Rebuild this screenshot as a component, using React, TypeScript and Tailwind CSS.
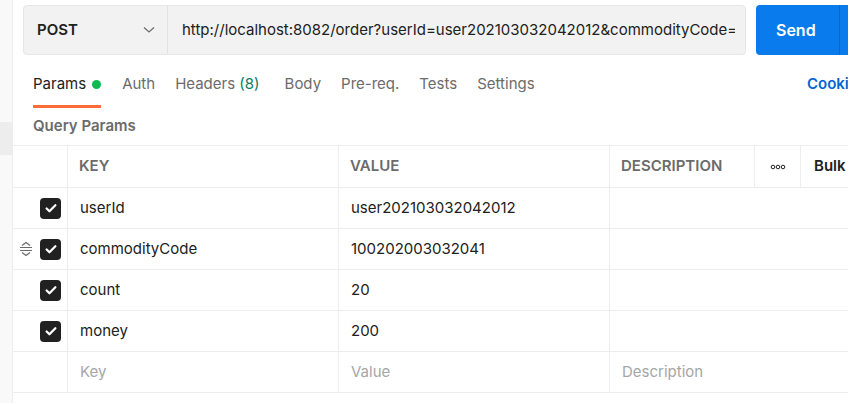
import React from "react";

const font = { fontFamily: "Inter, 'Noto Sans', sans-serif" };

function Check() {
  return (
    <div className="w-[21px] h-[21px] rounded-[4px] bg-[#212121] flex items-center justify-center">
      <svg width="14" height="14" viewBox="0 0 16 16" fill="none">
        <path d="M3 8.5l3.2 3.2L13 4.8" stroke="white" strokeWidth="2.6" strokeLinecap="round" strokeLinejoin="round" />
      </svg>
    </div>
  );
}

function Drag() {
  return (
    <svg width="14" height="16" viewBox="0 0 14 16" fill="none">
      <path d="M3 4.5L7 1.5l4 3" stroke="#6b6b6b" strokeWidth="1.2" />
      <path d="M1 6.5h12M1 9.5h12" stroke="#6b6b6b" strokeWidth="1.2" />
      <path d="M3 11.5L7 14.5l4-3" stroke="#6b6b6b" strokeWidth="1.2" />
    </svg>
  );
}

const rows = [
  { k: "userId", v: "user202103032042012", drag: false },
  { k: "commodityCode", v: "100202003032041", drag: true },
  { k: "count", v: "20", drag: false },
  { k: "money", v: "200", drag: false },
];

export default function App() {
  return (
    <div className="w-[848px] h-[403px] overflow-hidden bg-white flex" style={font}>
      <div className="w-[13px] shrink-0 bg-[#f9f9f9] border-r border-[#ededed] flex flex-col">
        <div className="h-[122px]" />
        <div className="h-[33px] bg-[#ededed]" />
      </div>
      <div className="flex-1 min-w-0 flex flex-col overflow-hidden">
        <div className="flex items-stretch pt-[5px] pl-[10px] h-[55px] gap-[10px]">
          <div className="w-[723px] shrink-0 flex bg-[#f2f2f2] border border-[#e6e6e6] rounded-[4px]">
            <div className="w-[144px] shrink-0 flex items-center justify-between pl-[13px] pr-[12px] border-r border-[#e3e3e3]">
              <span className="text-[15px] font-semibold text-[#212121]">POST</span>
              <svg width="12" height="8" viewBox="0 0 12 8" fill="none">
                <path d="M1 1.5l5 4.5 5-4.5" stroke="#6b6b6b" strokeWidth="1.2" />
              </svg>
            </div>
            <div className="flex-1 min-w-0 flex items-center pl-[14px] pr-[10px] overflow-hidden">
              <span className="text-[15px] text-[#212121] whitespace-nowrap overflow-hidden">
                http://localhost:8082/order?userId=user202103032042012&amp;commodityCode=100202003032041&amp;count=20&amp;money=200
              </span>
            </div>
          </div>
          <div className="flex-1 flex bg-[#097bed] rounded-l-[4px] overflow-hidden">
            <div className="w-[84px] shrink-0 flex items-center pl-[20px] border-r border-[#0a66c8]">
              <span className="text-[16px] font-semibold text-white">Send</span>
            </div>
          </div>
        </div>
        <div className="flex items-end h-[52px] pl-[20px] pr-0 relative">
          <div className="flex items-center text-[15px] text-[#6b6b6b] h-[46px] whitespace-nowrap">
            <div className="relative h-full flex items-center">
              <span className="text-[#212121]">Params</span>
              <span className="ml-[6px] w-[9px] h-[9px] rounded-full bg-[#0cbb52]" />
              <div className="absolute left-0 right-0 bottom-[-1px] h-[3px] bg-[#ff6c37]" />
            </div>
            <span className="ml-[21px]">Auth</span>
            <span className="ml-[20px]">
              Headers <span className="text-[#0f7b5f]">(8)</span>
            </span>
            <span className="ml-[25px]">Body</span>
            <span className="ml-[20px]">Pre-req.</span>
            <span className="ml-[20px]">Tests</span>
            <span className="ml-[20px]">Settings</span>
          </div>
          <div className="ml-auto w-[41px] shrink-0 h-[46px] flex items-center overflow-hidden">
            <span className="text-[15px] font-semibold text-[#0265d2] whitespace-nowrap">Cookies</span>
          </div>
        </div>
        <div className="h-[38px] flex items-center pl-[20px]">
          <span className="text-[15px] font-semibold text-[#6b6b6b]">Query Params</span>
        </div>
        <div className="border-t border-[#ededed]">
          <div className="flex h-[42px] border-b border-[#ededed] text-[15px] font-semibold text-[#6b6b6b]">
            <div className="w-[55px] shrink-0 border-r border-[#ededed]" />
            <div className="w-[271px] shrink-0 border-r border-[#ededed] flex items-center pl-[11px]">KEY</div>
            <div className="w-[271px] shrink-0 border-r border-[#ededed] flex items-center pl-[11px]">VALUE</div>
            <div className="w-[145px] shrink-0 border-r border-[#ededed] flex items-center pl-[11px]">DESCRIPTION</div>
            <div className="w-[46px] shrink-0 border-r border-[#ededed] flex items-center justify-center">
              <svg width="16" height="6" viewBox="0 0 16 6" fill="none">
                <circle cx="3" cy="3" r="1.8" stroke="#212121" strokeWidth="1" />
                <circle cx="8" cy="3" r="1.8" stroke="#212121" strokeWidth="1" />
                <circle cx="13" cy="3" r="1.8" stroke="#212121" strokeWidth="1" />
              </svg>
            </div>
            <div className="flex-1 min-w-0 flex items-center pl-[13px] text-[#212121] whitespace-nowrap overflow-hidden">Bulk Edit</div>
          </div>
          {rows.map((r) => (
            <div key={r.k} className="flex h-[41px] border-b border-[#ededed] text-[15px] text-[#212121]">
              <div className="w-[55px] shrink-0 border-r border-[#ededed] flex items-center justify-end pr-[6px] gap-[7px]">
                {r.drag && <Drag />}
                <Check />
              </div>
              <div className="w-[271px] shrink-0 border-r border-[#ededed] flex items-center pl-[12px]">{r.k}</div>
              <div className="w-[271px] shrink-0 border-r border-[#ededed] flex items-center pl-[12px]">{r.v}</div>
              <div className="w-[145px] shrink-0 flex items-center" />
              <div className="flex-1" />
            </div>
          ))}
          <div className="flex h-[41px] border-b border-[#ededed] text-[15px] text-[#a6a6a6]">
            <div className="w-[55px] shrink-0 border-r border-[#ededed]" />
            <div className="w-[271px] shrink-0 border-r border-[#ededed] flex items-center pl-[12px]">Key</div>
            <div className="w-[271px] shrink-0 border-r border-[#ededed] flex items-center pl-[12px]">Value</div>
            <div className="w-[145px] shrink-0 flex items-center pl-[12px]">Description</div>
            <div className="flex-1" />
          </div>
        </div>
      </div>
    </div>
  );
}
